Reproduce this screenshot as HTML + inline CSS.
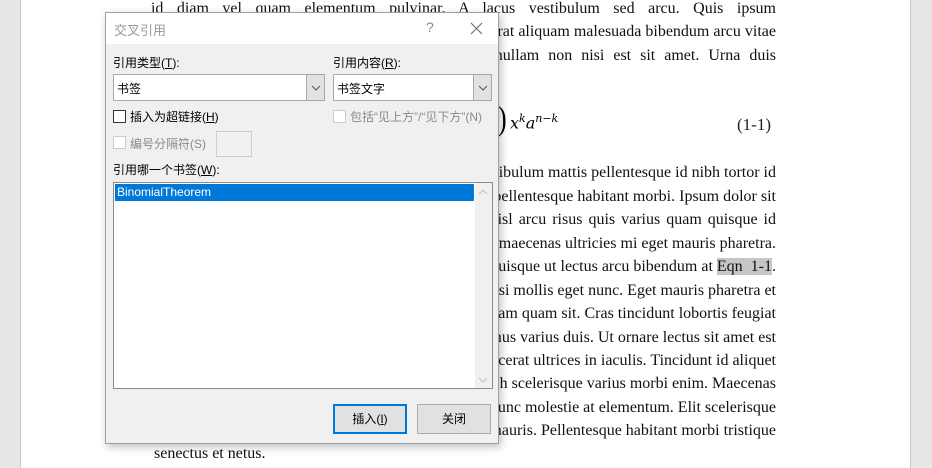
<!DOCTYPE html>
<html><head><meta charset="utf-8"><style>
*{margin:0;padding:0;box-sizing:border-box}
body{width:932px;height:468px;overflow:hidden;background:#e6e6e6;position:relative;font-family:"Liberation Sans","Noto Sans CJK SC",sans-serif}
.page{position:absolute;left:20px;top:0;width:891px;height:468px;background:#fff;border-left:1px solid #c8c8c8;border-right:1px solid #c8c8c8}
.ln{position:absolute;right:156px;font-family:"Liberation Serif",serif;font-size:16px;line-height:20px;color:#111;text-align:right;white-space:nowrap}
.dlg{position:absolute;left:105px;top:12px;width:394px;height:432px;background:#f0f0f0;border:1px solid #a0a0a0;box-shadow:2px 3px 8px rgba(0,0,0,.25);font-size:12px;color:#000}
.tb{position:absolute;left:0;top:0;width:392px;height:31px;background:#fff}
.a{position:absolute;white-space:nowrap}
.combo{position:absolute;height:27px;background:#fff;border:1px solid #a8a8a8}
.combo .btn{position:absolute;right:0;top:0;width:18px;height:25px;background:#e2e2e2;border-left:1px solid #a8a8a8}
.cb{position:absolute;width:13px;height:13px;border:1px solid #333;background:#fff}
.cb.d{border-color:#ccc}
.g{color:#8a8a8a}
.bt{position:absolute;top:391px;height:30px;width:74px;border:1px solid #adadad;background:#e1e1e1;text-align:center;line-height:28px}
</style></head><body>
<div class="page"></div>
<div class="ln" style="top:-1px;word-spacing:9.5px">id diam vel quam elementum pulvinar. A lacus vestibulum sed arcu. Quis ipsum</div>
<div class="ln" style="top:22px">suspendisse ultrices gravida dictum fusce ut placerat aliquam malesuada bibendum arcu vitae</div>
<div class="ln" style="top:46px;word-spacing:5px">elementum curabitur vitae nunc sed velit nullam non nisi est sit amet. Urna duis</div>
<div class="a" style="left:498px;top:104px;font-family:'Liberation Serif',serif;font-size:26px;transform:scaleY(1.3)">)</div>
<div class="a" style="left:510px;top:112px;font-family:'DejaVu Serif',serif;font-style:italic;font-size:16px">x<sup style="font-size:11px">k</sup>a<sup style="font-size:11px">n−k</sup></div>
<div class="a" style="left:737px;top:115px;font-family:'Liberation Serif',serif;font-size:17px;color:#222">(1-1)</div>
<div class="ln" style="top:163px">sed lectus vestibulum mattis pellentesque id nibh tortor id</div>
<div class="ln" style="top:187px">sit amet pellentesque habitant morbi. Ipsum dolor sit</div>
<div class="ln" style="top:210px;word-spacing:2px">amet nisl arcu risus quis varius quam quisque id</div>
<div class="ln" style="top:234px">diam maecenas ultricies mi eget mauris pharetra.</div>
<div class="ln" style="top:257px">quisque ut lectus arcu bibendum at <span style="background:#c6c6c6">Eqn&nbsp; 1-1</span>.</div>
<div class="ln" style="top:281px">nisi mollis eget nunc. Eget mauris pharetra et</div>
<div class="ln" style="top:304px">ut diam quam sit. Cras tincidunt lobortis feugiat</div>
<div class="ln" style="top:328px">vivamus varius duis. Ut ornare lectus sit amet est</div>
<div class="ln" style="top:351px">placerat ultrices in iaculis. Tincidunt id aliquet</div>
<div class="ln" style="top:374px">nibh scelerisque varius morbi enim. Maecenas</div>
<div class="ln" style="top:398px">nunc molestie at elementum. Elit scelerisque</div>
<div class="ln" style="top:421px">mauris. Pellentesque habitant morbi tristique</div>
<div class="ln" style="top:444px;right:auto;left:154px;text-align:left">senectus et netus.</div>

<div class="dlg">
 <div class="tb"></div>
 <div class="a" style="left:8px;top:7px;font-size:13px;color:#999">交叉引用</div>
 <div class="a" style="left:320px;top:6px;font-size:14px;color:#888">?</div>
 <svg class="a" style="left:364px;top:9px" width="13" height="13"><path d="M1 1L12 12M12 1L1 12" stroke="#666" stroke-width="1"/></svg>
 <div class="a" style="left:7px;top:41px">引用类型(<u>T</u>):</div>
 <div class="a" style="left:227px;top:41px">引用内容(<u>R</u>):</div>
 <div class="combo" style="left:7px;top:61px;width:212px"><span class="a" style="left:3px;top:5px">书签</span><div class="btn"><svg width="18" height="25"><path d="M5 11L9 15L13 11" stroke="#555" fill="none"/></svg></div></div>
 <div class="combo" style="left:227px;top:61px;width:159px"><span class="a" style="left:3px;top:5px">书签文字</span><div class="btn"><svg width="18" height="25"><path d="M5 11L9 15L13 11" stroke="#555" fill="none"/></svg></div></div>
 <div class="cb" style="left:7px;top:97px"></div>
 <div class="a" style="left:24px;top:95px">插入为超链接(<u>H</u>)</div>
 <div class="cb d" style="left:227px;top:97px"></div>
 <div class="a g" style="left:244px;top:95px">包括“见上方”/“见下方”(N)</div>
 <div class="cb d" style="left:7px;top:123px"></div>
 <div class="a g" style="left:24px;top:122px">编号分隔符(S)</div>
 <div class="a" style="left:110px;top:118px;width:36px;height:26px;border:1px solid #ccc;background:#f0f0f0"></div>
 <div class="a" style="left:7px;top:148px">引用哪一个书签(<u>W</u>):</div>
 <div class="a" style="left:7px;top:169px;width:380px;height:207px;background:#fff;border:1px solid #8c8c8c">
  <div class="a" style="left:1px;top:1px;width:359px;height:17px;background:#0078d7;color:#fff;line-height:17px;padding-left:2px">BinomialTheorem</div>
  <div class="a" style="right:0;top:0;width:17px;height:205px;background:#f0f0f0"></div>
  <svg class="a" style="right:4px;top:5px" width="10" height="8"><path d="M1 6L5 2L9 6" stroke="#c0c0c0" fill="none"/></svg>
  <svg class="a" style="right:4px;bottom:4px" width="10" height="8"><path d="M1 2L5 6L9 2" stroke="#c0c0c0" fill="none"/></svg>
 </div>
 <div class="bt" style="left:227px;border:2px solid #0078d7;line-height:26px">插入(<u>I</u>)</div>
 <div class="bt" style="left:311px">关闭</div>
</div>
</body></html>
